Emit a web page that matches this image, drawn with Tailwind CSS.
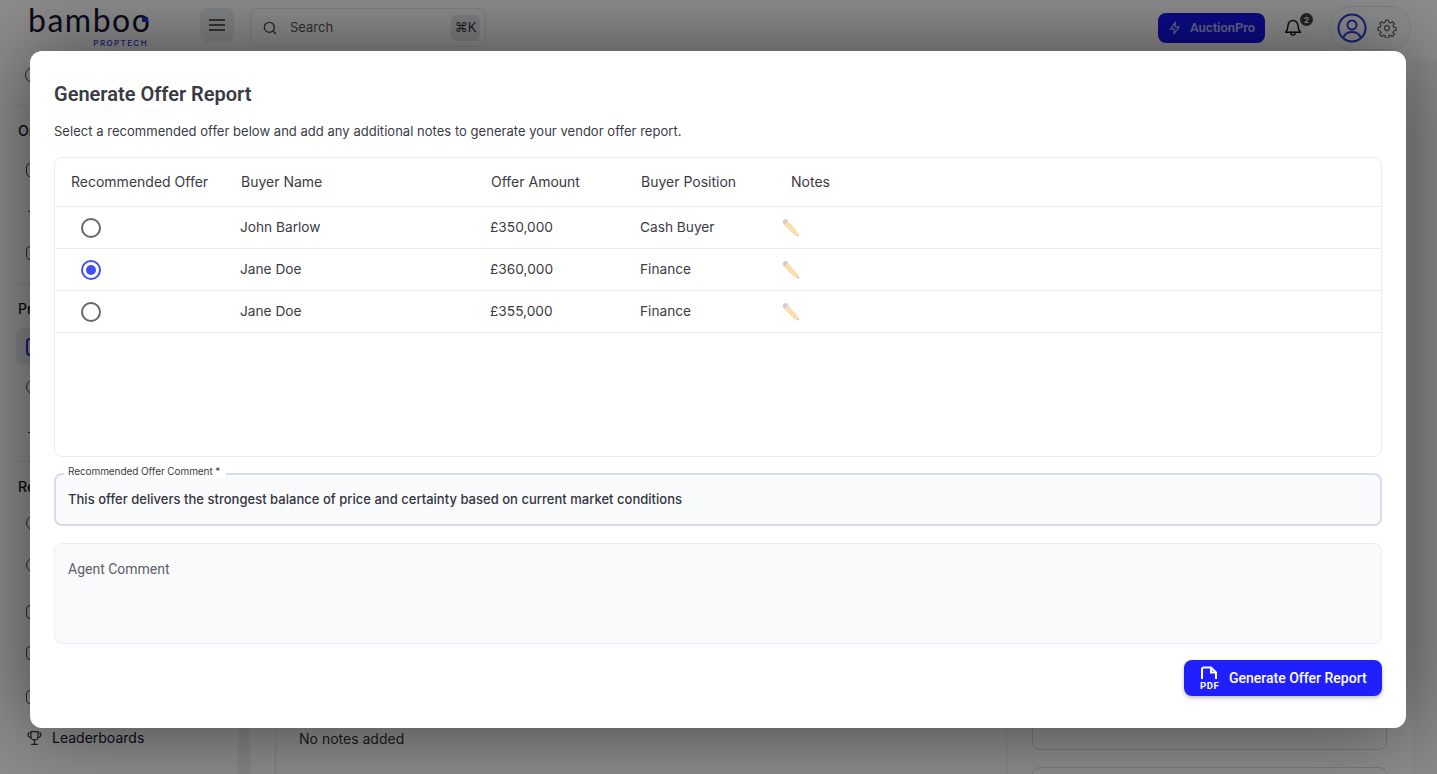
<!DOCTYPE html>
<html>
<head>
<meta charset="utf-8">
<script src="https://cdn.jsdelivr.net/npm/@tailwindcss/browser@4"></script>
</head>
<body class="w-[1437px] h-[774px] overflow-hidden font-['Inter',sans-serif]">
<div class="relative w-[1437px] h-[774px] overflow-hidden bg-white">
  <!-- page behind -->
  <header class="h-[56px] flex items-center bg-white pl-[28px] pr-[26px]">
    <div class="w-[122px] flex flex-col items-end relative">
      <div class="font-['Lato',sans-serif] text-[#14162e] text-[32px] leading-[26px] tracking-[1.5px] w-[122px] -mt-[2px] -ml-[2px] whitespace-nowrap">bamboo</div>
      <span class="absolute right-[2px] top-[8px] w-[6px] h-[5px] bg-[#2a2fd0]"></span>
      <div class="text-[#2a2fd0] text-[8px] leading-[10px] tracking-[1.4px] font-medium mt-[5px] mr-[2px]">PROPTECH</div>
    </div>
    <div class="ml-[50px] w-[34px] h-[34px] rounded-lg bg-[#eceef2] flex items-center justify-center -mt-[6px]">
      <svg width="16" height="14" viewBox="0 0 16 14" fill="none" stroke="#333" stroke-width="1.6"><path d="M0 2h16M0 7h16M0 12h16"/></svg>
    </div>
    <div class="ml-[16px] w-[236px] h-[39px] -mt-[1px] rounded-lg border border-[#e5e7eb] flex items-center pl-[11px] pr-[5px]">
      <svg width="16" height="16" viewBox="0 0 24 24" fill="none" stroke="#444" stroke-width="2"><circle cx="11" cy="11" r="7.5"/><path d="M21 21l-4.500-4.500"/></svg>
      <span class="ml-[12px] text-[13px] text-[#555]">Search</span>
      <span class="ml-auto w-[29px] h-[26px] rounded-md bg-[#e6e8ec] text-[#333] text-[13px] flex items-center justify-center">⌘K</span>
    </div>
    <div class="ml-auto w-[107px] h-[30px] -mt-[1px] rounded-lg bg-[#1414f5] flex items-center pl-[10px] text-white/70">
      <svg width="14" height="14" viewBox="0 0 24 24" fill="none" stroke="currentColor" stroke-width="2" stroke-linejoin="round"><path d="M13 2L4 14h7l-1 8 9-12h-7l1-8z"/></svg>
      <span class="ml-[8px] text-[13px] font-semibold font-['Roboto',sans-serif]">AuctionPro</span>
    </div>
    <div class="relative ml-[18px] w-[20px] h-[20px]">
      <svg width="20" height="20" viewBox="0 0 24 24" fill="none" stroke="#111" stroke-width="1.700" stroke-linecap="round" stroke-linejoin="round"><path d="M6 9a6 6 0 0 1 12 0c0 5 2 7 3 8H3c1-1 3-3 3-8z"/><path d="M9.500 17v1a2.500 2.500 0 0 0 5 0v-1"/></svg>
      <span class="absolute -top-[5px] -right-[10px] w-[13px] h-[13px] rounded-full bg-[#444] text-white text-[8px] font-bold flex items-center justify-center">2</span>
    </div>
    <div class="ml-[26px] w-[82px] h-[44px] -mt-[1px] rounded-full border border-[#e5e7eb] flex items-center pl-[7px] gap-[10px]">
      <svg width="30" height="30" viewBox="0 0 30 30" fill="none" stroke="#2a3bd8" stroke-width="2"><circle cx="15" cy="15" r="13.500"/><circle cx="15" cy="12" r="4.500"/><path d="M6.500 24c2-4 5-5 8.500-5s6.500 1 8.500 5"/></svg>
      <svg width="20" height="20" viewBox="0 0 24 24" fill="none" stroke="#666" stroke-width="1.500" stroke-linejoin="round"><circle cx="12" cy="12" r="3"/><path d="M10.300 2.500h3.400l.6 2.800 1.700.7 2.400-1.500 2.400 2.400-1.500 2.400.7 1.700 2.800.6v3.400l-2.800.6-.7 1.700 1.500 2.400-2.400 2.400-2.400-1.500-1.700.7-.6 2.800h-3.400l-.6-2.800-1.700-.7-2.400 1.500-2.400-2.400 1.500-2.400-.7-1.700-2.800-.6v-3.400l2.800-.6.7-1.700-1.500-2.400 2.400-2.400 2.400 1.500 1.700-.7z"/></svg>
    </div>
  </header>
  <div class="flex h-[718px] pt-[4px]">
    <aside class="w-[238px] h-full bg-white pl-[18px] text-[#14162e] relative">
      <div class="h-[30px] flex items-center pl-[7px]"><span class="w-[16px] h-[16px] rounded-full border border-[#444]"></span></div>
      <div class="h-px bg-[#e5e7eb] mt-[15px]"></div>
      <div class="mt-[15px] text-[14px] font-medium leading-[20px]">Orders</div>
      <div class="mt-[22px] ml-[8px] w-[14px] h-[14px] rounded border border-[#444]"></div>
      <div class="mt-[34px] ml-[10px] h-px w-[6px] bg-[#444]"></div>
      <div class="mt-[34px] ml-[8px] w-[14px] h-[14px] rounded border border-[#444]"></div>
      <div class="h-px bg-[#e5e7eb] mt-[23px]"></div>
      <div class="mt-[15px] text-[14px] font-medium leading-[20px]">Properties</div>
      <div class="mt-[9px] -ml-[2px] h-[37px] w-[200px] rounded-lg bg-[#eceef2] flex items-center pl-[10px]"><span class="w-[12px] h-[18px] rounded border-2 border-[#2a2fd0]"></span></div>
      <div class="mt-[15px] ml-[8px] w-[14px] h-[14px] rounded-full border border-[#444]"></div>
      <div class="mt-[38px] ml-[10px] h-px w-[6px] bg-[#444]"></div>
      <div class="h-px bg-[#e5e7eb] mt-[28px]"></div>
      <div class="mt-[15px] text-[14px] font-medium leading-[20px]">Reports</div>
      <div class="mt-[19px] ml-[8px] w-[14px] h-[14px] rounded-full border border-[#444]"></div>
      <div class="mt-[28px] ml-[8px] w-[14px] h-[14px] rounded-full border border-[#444]"></div>
      <div class="mt-[33px] ml-[8px] w-[14px] h-[14px] rounded border border-[#444]"></div>
      <div class="mt-[27px] ml-[8px] w-[14px] h-[14px] rounded border border-[#444]"></div>
      <div class="mt-[30px] ml-[8px] w-[14px] h-[14px] rounded border border-[#444]"></div>
      <div class="absolute left-[26px] top-[668px] flex items-center gap-[9px] text-[14px] text-[#14162e] leading-[20px]">
        <svg width="17" height="18" viewBox="0 0 24 24" fill="none" stroke="#333" stroke-width="1.600" stroke-linecap="round" stroke-linejoin="round"><path d="M7 3h10v7a5 5 0 0 1-10 0z"/><path d="M7 5H3v2a4 4 0 0 0 4 4M17 5h4v2a4 4 0 0 1-4 4M12 15v5M8 21h8"/></svg>
        <span>Leaderboards</span>
      </div>
    </aside>
    <div class="w-[12px] h-full bg-[#f0f0f0]"></div>
    <main class="flex-1 flex pl-[25px] pr-[25px] gap-[25px]">
      <div class="w-[732px] h-full bg-white border-x border-[#e5e7eb] relative">
        <span class="absolute left-[23px] top-[669px] text-[14px] text-[#333] leading-[20px]">No notes added</span>
      </div>
      <div class="w-[355px] h-full pt-[640px] flex flex-col gap-[17px]">
        <div class="h-[50px] shrink-0 rounded-lg border border-[#ddd] bg-white"></div>
        <div class="h-[60px] shrink-0 rounded-lg border border-[#ddd] bg-white"></div>
      </div>
    </main>
    <div class="w-[25px] h-full bg-[#f8f8f8]"></div>
  </div>
  <!-- overlay -->
  <div class="absolute inset-0 bg-black/45"></div>
  <!-- modal -->
  <div class="absolute left-[30px] top-[51px] w-[1376px] h-[677px] rounded-xl bg-white shadow-[0_0_80px_rgba(0,0,0,0.5)] px-[24px] flex flex-col">
    <h2 class="mt-[30px] text-[20px] leading-[26px] font-semibold text-[#3a3b44] font-['Roboto',sans-serif]">Generate Offer Report</h2>
    <p class="mt-[14px] text-[13px] leading-[20px] text-[#3a3b44] tracking-[0.03px]">Select a recommended offer below and add any additional notes to generate your vendor offer report.</p>
    <div class="mt-[16px] h-[300px] shrink-0 rounded-lg border border-[#ebebf3] text-[13.7px] text-[#3a3b44]">
      <div class="h-[49px] flex items-center border-b border-[#ebebf3] pb-[2px] text-[14px]">
        <span class="ml-[16px] w-[170px]">Recommended Offer</span>
        <span class="w-[250px]">Buyer Name</span>
        <span class="w-[150px]">Offer Amount</span>
        <span class="w-[150px]">Buyer Position</span>
        <span>Notes</span>
      </div>
      <div class="h-[42px] flex items-center border-b border-[#ebebf3]">
        <span class="ml-[26px] w-[20px] h-[20px] mt-[1px] rounded-full border-2 border-[#666]"></span>
        <span class="ml-[139px] w-[250px]">John Barlow</span>
        <span class="w-[150px]">£350,000</span>
        <span class="w-[141px]">Cash Buyer</span>
        <svg width="20" height="20" viewBox="0 0 20 20"><path d="M6.500 2.500L17 14.500l.5 3.500-3.500-.5L2.500 6.500z" fill="#f8dfae"/><path d="M3 1.500L5.500 1 7 3 3 6.500 1.500 4z" fill="#c9cdd2"/><path d="M16.300 17.700l1.100-1.200.4 2z" fill="#999"/></svg>
      </div>
      <div class="h-[42px] flex items-center border-b border-[#ebebf3]">
        <span class="ml-[26px] w-[20px] h-[20px] mt-[1px] rounded-full border-2 border-[#3d50f5] flex items-center justify-center"><span class="w-[10px] h-[10px] rounded-full bg-[#3d50f5]"></span></span>
        <span class="ml-[139px] w-[250px]">Jane Doe</span>
        <span class="w-[150px]">£360,000</span>
        <span class="w-[141px]">Finance</span>
        <svg width="20" height="20" viewBox="0 0 20 20"><path d="M6.500 2.500L17 14.500l.5 3.500-3.500-.5L2.500 6.500z" fill="#f8dfae"/><path d="M3 1.500L5.500 1 7 3 3 6.500 1.500 4z" fill="#c9cdd2"/><path d="M16.300 17.700l1.100-1.200.4 2z" fill="#999"/></svg>
      </div>
      <div class="h-[42px] flex items-center border-b border-[#ebebf3]">
        <span class="ml-[26px] w-[20px] h-[20px] mt-[1px] rounded-full border-2 border-[#666]"></span>
        <span class="ml-[139px] w-[250px]">Jane Doe</span>
        <span class="w-[150px]">£355,000</span>
        <span class="w-[141px]">Finance</span>
        <svg width="20" height="20" viewBox="0 0 20 20"><path d="M6.500 2.500L17 14.500l.5 3.500-3.500-.5L2.500 6.500z" fill="#f8dfae"/><path d="M3 1.500L5.500 1 7 3 3 6.500 1.500 4z" fill="#c9cdd2"/><path d="M16.300 17.700l1.100-1.200.4 2z" fill="#999"/></svg>
      </div>
    </div>
    <div class="relative mt-[16px] h-[53px] shrink-0 rounded-lg border-2 border-[#d9dce8] bg-[#f9fafc] flex items-center pl-[12px] pt-[1px]">
      <span class="text-[13px] font-medium text-[#33343d] tracking-[0.02px]">This offer delivers the strongest balance of price and certainty based on current market conditions</span>
      <span class="absolute left-[8px] -top-[10px] bg-white pl-[4px] pr-[6px] text-[10px] leading-[13px] text-[#3a3b44] tracking-[-0.08px]">Recommended Offer Comment *</span>
    </div>
    <div class="mt-[17px] h-[101px] shrink-0 rounded-lg border border-[#ecedf2] bg-[#f9fafc] pl-[13px] pt-[12px]">
      <span class="text-[14px] leading-[20px] text-[#5f6068] font-['Roboto',sans-serif]">Agent Comment</span>
    </div>
    <div class="mt-[16px] flex justify-end">
      <button class="w-[198px] h-[36px] rounded-lg bg-[#1f1fff] text-white shadow-[0_2px_4px_rgba(0,0,0,0.25)] flex items-center pl-[15px] font-['Roboto',sans-serif]">
        <svg width="20" height="24" viewBox="0 0 20 24" fill="none"><path d="M3 13V3a1.500 1.500 0 0 1 1.500-1.500H12l5 5V13" stroke="#fff" stroke-width="2"/><path d="M12 1.500V6.500h5" stroke="#fff" stroke-width="2" fill="none"/><text x="1" y="22.500" fill="#fff" font-size="9.500" font-weight="700" font-family="Roboto" letter-spacing=".6">PDF</text></svg>
        <span class="ml-[10px] text-[14px] font-medium">Generate Offer Report</span>
      </button>
    </div>
  </div>
</div>
</body>
</html>
